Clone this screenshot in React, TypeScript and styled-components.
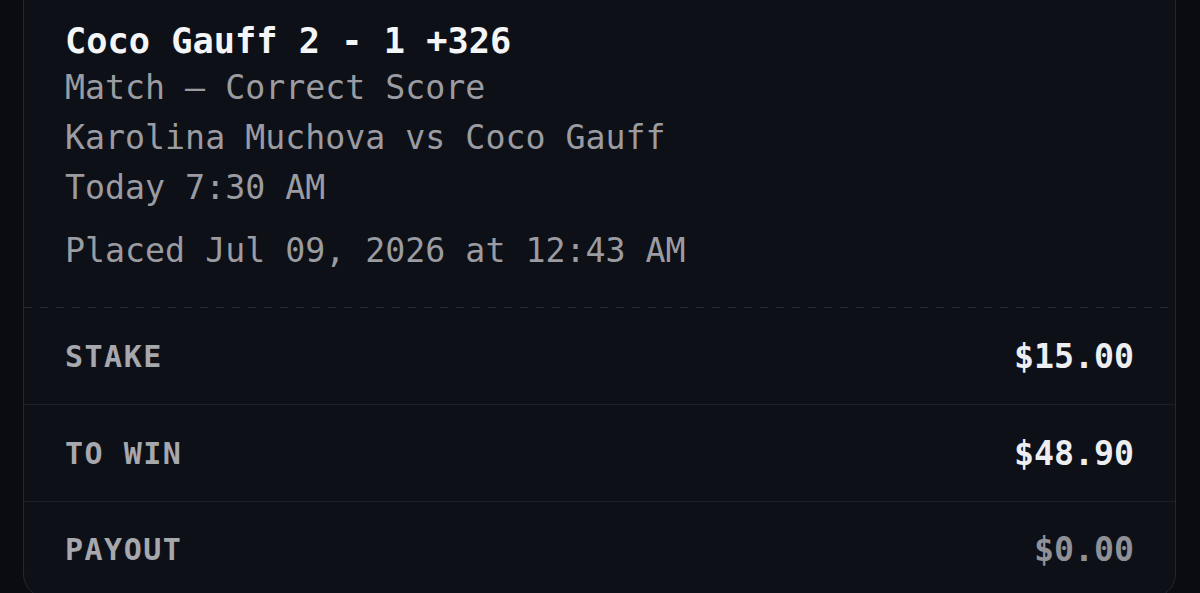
import React from "react";
import styled, { createGlobalStyle } from "styled-components";

const GlobalStyle = createGlobalStyle`
  html, body {
    margin: 0;
    padding: 0;
    background: #0b0c11;
    overflow: hidden;
  }
  body {
    font-family: "DejaVu Sans Mono", "Liberation Mono", monospace;
    -webkit-font-smoothing: antialiased;
  }
`;

const Page = styled.div`
  width: 1200px;
  height: 593px;
  overflow: hidden;
  padding-left: 23px;
  box-sizing: border-box;
`;

const Card = styled.section`
  width: 1153px;
  box-sizing: border-box;
  margin-top: -30px;
  background: #0e1017;
  border: 1px solid #232733;
  border-radius: 24px;
  overflow: hidden;
`;

const Header = styled.div`
  padding: 48px 41px 31px 41px;
  display: flex;
  flex-direction: column;
`;

const Title = styled.h1`
  margin: 0;
  font-size: 35.3px;
  line-height: 44px;
  font-weight: 700;
  color: #f4f5f7;
`;

const Meta = styled.div<{ $gap?: number }>`
  font-size: 33.25px;
  line-height: 50px;
  color: #9a9ca2;
  margin-top: ${(p) => p.$gap ?? 0}px;
  white-space: nowrap;
`;

const Dashed = styled.div`
  height: 1px;
  background: repeating-linear-gradient(
    to right,
    #272b37 0 8px,
    transparent 8px 16px
  );
`;

const Row = styled.div<{ $first?: boolean; $h: number }>`
  height: ${(p) => p.$h}px;
  display: flex;
  align-items: center;
  justify-content: space-between;
  padding: 0 41px;
  border-top: ${(p) => (p.$first ? "none" : "1px solid #1d2029")};
`;

const Label = styled.span`
  font-size: 30px;
  font-weight: 700;
  letter-spacing: 1.5px;
  color: #a6a8ad;
`;

const Amount = styled.span<{ $muted?: boolean }>`
  font-size: 33.25px;
  font-weight: 700;
  color: ${(p) => (p.$muted ? "#8f9197" : "#eceef1")};
`;

const rows = [
  { label: "STAKE", value: "$15.00", h: 96 },
  { label: "TO WIN", value: "$48.90", h: 96 },
  { label: "PAYOUT", value: "$0.00", h: 95, muted: true },
];

export default function App() {
  return (
    <>
      <GlobalStyle />
      <Page>
        <Card>
          <Header>
            <Title>Coco Gauff 2 - 1 +326</Title>
            <Meta>Match — Correct Score</Meta>
            <Meta>Karolina Muchova vs Coco Gauff</Meta>
            <Meta>Today 7:30 AM</Meta>
            <Meta $gap={13}>Placed Jul 09, 2026 at 12:43 AM</Meta>
          </Header>
          <Dashed />
          {rows.map((r, i) => (
            <Row key={r.label} $first={i === 0} $h={r.h}>
              <Label>{r.label}</Label>
              <Amount $muted={r.muted}>{r.value}</Amount>
            </Row>
          ))}
        </Card>
      </Page>
    </>
  );
}
